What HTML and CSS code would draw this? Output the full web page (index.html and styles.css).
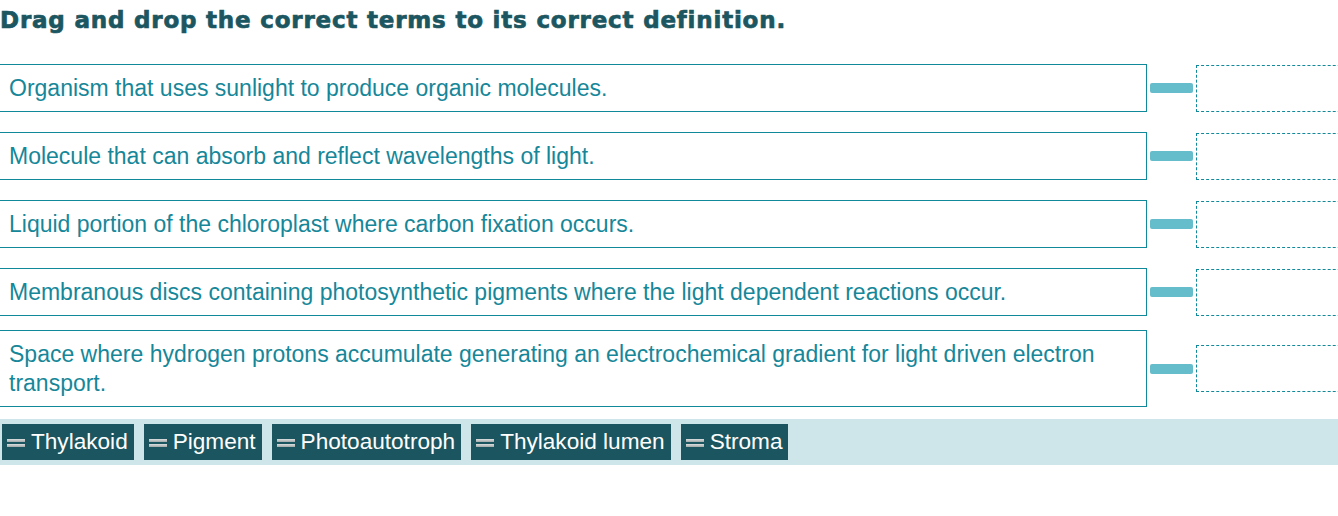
FILE: index.html
```html
<!DOCTYPE html>
<html>
<head>
<meta charset="utf-8">
<link rel="stylesheet" href="styles.css">
</head>
<body>
<div class="page">
  <h1 class="title">Drag and drop the correct terms to its correct definition.</h1>
  <div class="rows">
    <div class="row">
      <div class="def">Organism that uses sunlight to produce organic molecules.</div>
      <div class="connector"></div>
      <div class="drop"></div>
    </div>
    <div class="row">
      <div class="def">Molecule that can absorb and reflect wavelengths of light.</div>
      <div class="connector"></div>
      <div class="drop"></div>
    </div>
    <div class="row">
      <div class="def">Liquid portion of the chloroplast where carbon fixation occurs.</div>
      <div class="connector"></div>
      <div class="drop"></div>
    </div>
    <div class="row">
      <div class="def">Membranous discs containing photosynthetic pigments where the light dependent reactions occur.</div>
      <div class="connector"></div>
      <div class="drop"></div>
    </div>
    <div class="row row-last">
      <div class="def">Space where hydrogen protons accumulate generating an electrochemical gradient for light driven electron transport.</div>
      <div class="connector"></div>
      <div class="drop"></div>
    </div>
  </div>
  <div class="tray">
    <div class="chip"><span class="grip"></span><span class="chip-text">Thylakoid</span></div>
    <div class="chip"><span class="grip"></span><span class="chip-text">Pigment</span></div>
    <div class="chip"><span class="grip"></span><span class="chip-text">Photoautotroph</span></div>
    <div class="chip"><span class="grip"></span><span class="chip-text">Thylakoid lumen</span></div>
    <div class="chip"><span class="grip"></span><span class="chip-text">Stroma</span></div>
  </div>
</div>
</body>
</html>
```
FILE: styles.css
```css
html, body {
  margin: 0;
  padding: 0;
  background: #ffffff;
}
.page {
  width: 1338px;
  height: 516px;
  overflow: hidden;
  font-family: "Liberation Sans", Arial, sans-serif;
}
.title {
  margin: 0;
  padding: 6px 0 0 0;
  height: 64px;
  box-sizing: border-box;
  font-family: "DejaVu Sans", "Liberation Sans", sans-serif;
  font-size: 23px;
  line-height: 28px;
  font-weight: 700;
  letter-spacing: 0.8px;
  color: #1b5661;
  -webkit-text-stroke: 0.7px #1b5661;
  white-space: nowrap;
}
.rows {
  display: flex;
  flex-direction: column;
  gap: 20px;
}
.row {
  display: flex;
  align-items: center;
  margin-left: -1px;
}
.row-last {
  margin-top: -6px;
}
.def {
  width: 1148px;
  flex: none;
  box-sizing: border-box;
  border: 1px solid #10899a;
  padding: 9px 9px 8px 9px;
  font-size: 23px;
  line-height: 29px;
  color: #168799;
}
.connector {
  flex: none;
  width: 43px;
  height: 10px;
  margin: 0 3px;
  border-radius: 2px;
  background: #65bdcc;
}
.drop {
  flex: none;
  width: 160px;
  height: 47px;
  box-sizing: border-box;
  border: 1px dashed #10899a;
}
.tray {
  margin-top: 12px;
  height: 46px;
  box-sizing: border-box;
  padding: 5px 2px;
  background: #cee5e9;
  display: flex;
  gap: 10px;
}
.chip {
  display: flex;
  align-items: center;
  height: 36px;
  padding: 0 6px 0 5px;
  background: #1b5660;
  color: #ffffff;
  font-size: 22.6px;
}
.grip {
  width: 18px;
  height: 8px;
  margin-right: 6px;
  margin-top: 1px;
  background:
    linear-gradient(#dcdfdf, #a2a8a8) top / 100% 3px no-repeat,
    linear-gradient(#dcdfdf, #a2a8a8) bottom / 100% 3px no-repeat;
}
.chip-text {
  line-height: 36px;
}
```
